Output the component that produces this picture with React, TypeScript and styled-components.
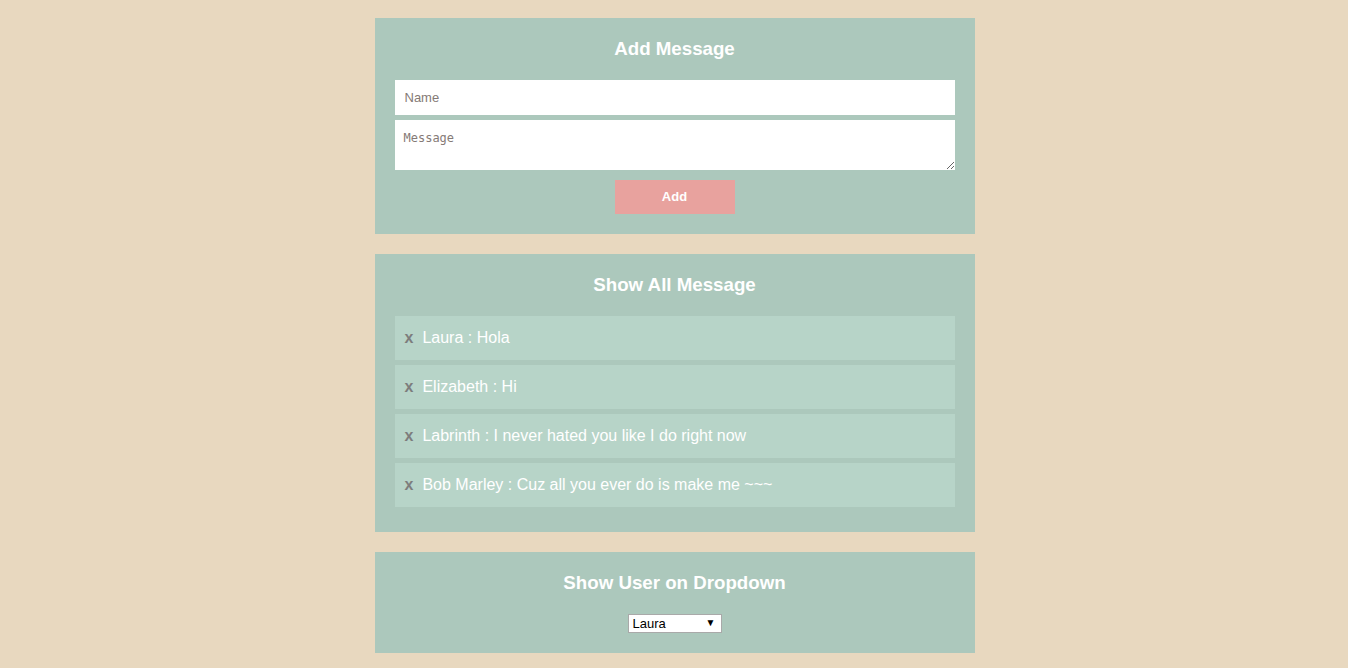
import React from "react";
import styled, { createGlobalStyle } from "styled-components";

const Global = createGlobalStyle`
  html, body { margin: 0; padding: 0; }
  body {
    background: #e8d8bf;
    font-family: "Liberation Sans", Arial, sans-serif;
  }
`;

const Page = styled.div`
  display: flex;
  flex-direction: column;
  align-items: center;
  gap: 20px;
  padding: 18px 0 0 1px;
`;

const Card = styled.section<{ $pb?: number }>`
  width: 600px;
  box-sizing: border-box;
  background: #acc8bc;
  padding: 20px 20px ${(p) => p.$pb ?? 20}px;
  display: flex;
  flex-direction: column;
  align-items: center;
`;

const Title = styled.h2<{ $mb: number }>`
  margin: 0 0 ${(p) => p.$mb}px;
  color: #ffffff;
  font-size: 18.72px;
  line-height: 21px;
  font-weight: bold;
`;

const NameInput = styled.input`
  width: 560px;
  height: 35px;
  box-sizing: border-box;
  border: none;
  outline: none;
  padding: 0 10px;
  font-family: "Liberation Sans", Arial, sans-serif;
  font-size: 13px;
  &::placeholder { color: #857a76; }
`;

const MessageArea = styled.textarea`
  width: 560px;
  height: 50px;
  box-sizing: border-box;
  border: none;
  outline: none;
  margin-top: 5px;
  padding: 11px 9px 4px;
  font-family: "DejaVu Sans Mono", monospace;
  font-size: 12px;
  line-height: 14px;
  &::placeholder { color: #857a76; }
`;

const AddButton = styled.button`
  margin-top: 10px;
  width: 120px;
  height: 34px;
  border: none;
  background: #e8a29e;
  color: #ffffff;
  font-family: "Liberation Sans", Arial, sans-serif;
  font-size: 13px;
  font-weight: bold;
  padding: 0 0 1px;
  cursor: pointer;
`;

const List = styled.ul`
  list-style: none;
  margin: 0;
  padding: 0;
  width: 560px;
  display: flex;
  flex-direction: column;
  gap: 5px;
`;

const Row = styled.li`
  height: 44px;
  background: #b7d4c8;
  display: flex;
  align-items: center;
  padding: 0 10px;
  gap: 9px;
  color: #ffffff;
  font-size: 16px;
`;

const Remove = styled.span`
  color: #7d7d7d;
  font-weight: bold;
  font-size: 16px;
  cursor: pointer;
`;

const SelectWrap = styled.div`
  position: relative;
  width: 94px;
  height: 19px;
`;

const Select = styled.select`
  appearance: none;
  -webkit-appearance: none;
  width: 94px;
  height: 19px;
  box-sizing: border-box;
  font-family: "Liberation Sans", Arial, sans-serif;
  font-size: 13px;
  color: #000;
  border: 1px solid #a9a9a9;
  background: #ffffff;
  padding: 0 0 0 4px;
  border-radius: 0;
  outline: none;
`;

const Arrow = styled.span`
  position: absolute;
  right: 6px;
  top: 3px;
  font-size: 10px;
  line-height: 12px;
  color: #000;
  pointer-events: none;
`;

const messages = [
  { name: "Laura", text: "Hola" },
  { name: "Elizabeth", text: "Hi" },
  { name: "Labrinth", text: "I never hated you like I do right now" },
  { name: "Bob Marley", text: "Cuz all you ever do is make me ~~~" },
];

export default function App() {
  return (
    <>
      <Global />
      <Page>
        <Card>
          <Title $mb={21}>Add Message</Title>
          <NameInput placeholder="Name" />
          <MessageArea placeholder="Message" />
          <AddButton>Add</AddButton>
        </Card>
        <Card $pb={25}>
          <Title $mb={21}>Show All Message</Title>
          <List>
            {messages.map((m) => (
              <Row key={m.name}>
                <Remove>x</Remove>
                <span>
                  {m.name} : {m.text}
                </span>
              </Row>
            ))}
          </List>
        </Card>
        <Card>
          <Title $mb={21}>Show User on Dropdown</Title>
          <SelectWrap>
            <Select defaultValue="Laura">
              {messages.map((m) => (
                <option key={m.name}>{m.name}</option>
              ))}
            </Select>
            <Arrow>▼</Arrow>
          </SelectWrap>
        </Card>
      </Page>
    </>
  );
}
